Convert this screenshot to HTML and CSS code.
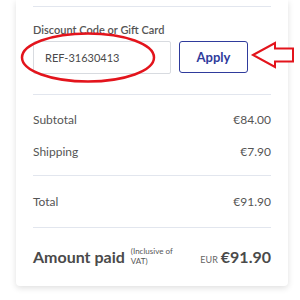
FILE: index.html
```html
<!DOCTYPE html>
<html>
<head>
<meta charset="utf-8">
<link rel="stylesheet" href="styles.css">
</head>
<body>
<div class="card">
  <hr class="divider first">
  <div class="discount">
    <div class="label">Discount Code or Gift Card</div>
    <div class="code-row">
      <div class="input">REF-31630413</div>
      <button class="apply">Apply</button>
    </div>
  </div>
  <hr class="divider">
  <div class="rows">
    <div class="row"><span>Subtotal</span><span>€84.00</span></div>
    <div class="row"><span>Shipping</span><span>€7.90</span></div>
  </div>
  <hr class="divider">
  <div class="row total"><span>Total</span><span>€91.90</span></div>
  <hr class="divider">
  <div class="paid">
    <div class="paid-left"><span class="paid-label">Amount paid</span><span class="vat">(Inclusive of<br>VAT)</span></div>
    <div class="paid-right"><span class="cur">EUR</span><span class="paid-amt">€91.90</span></div>
  </div>
</div>
<svg class="annot" width="300" height="300" viewBox="0 0 300 300">
  <ellipse cx="88" cy="57.5" rx="66" ry="24" fill="none" stroke="#e3141c" stroke-width="2.5"/>
  <path d="M253 55 L275 43 L275 48.5 L293 48.5 L293 61.5 L275 61.5 L275 67 Z" fill="#fff" stroke="#e3141c" stroke-width="2" stroke-linejoin="miter"/>
</svg>
</body>
</html>
```
FILE: styles.css
```css
html, body {
  margin: 0;
  padding: 0;
  background: #fff;
}
body {
  width: 300px;
  height: 300px;
  position: relative;
  overflow: hidden;
  font-family: Lato, "Noto Sans", sans-serif;
  color: #4a4a4a;
}
.card {
  margin-left: 16px;
  width: 272px;
  height: 286px;
  box-sizing: border-box;
  padding: 6px 17px 0;
  background: #fff;
  box-shadow: 0 2px 6px rgba(0,0,0,0.13);
  border-radius: 0 0 4px 4px;
}
.divider {
  border: 0;
  border-top: 1px solid #e2e6ee;
  margin: 0;
}
.discount {
  padding-top: 16px;
  padding-bottom: 20px;
}
.label {
  font-size: 11px;
  line-height: 14px;
  font-weight: 600;
  color: #555;
}
.code-row {
  display: flex;
  gap: 8px;
  margin-top: 4px;
}
.input {
  width: 138px;
  height: 33px;
  box-sizing: border-box;
  border: 1px solid #d8dbe0;
  border-radius: 2px;
  padding-left: 11px;
  font-size: 11px;
  line-height: 31px;
  color: #4a4a4a;
}
.apply {
  width: 69px;
  height: 32px;
  box-sizing: border-box;
  border: 1px solid #2f3b9c;
  border-radius: 3px;
  background: #fff;
  color: #2f3b9c;
  font-family: Lato, "Noto Sans", sans-serif;
  font-weight: 700;
  font-size: 13px;
  padding: 0;
}
.rows {
  padding: 17px 0 16px;
  display: flex;
  flex-direction: column;
  gap: 17px;
}
.row {
  display: flex;
  justify-content: space-between;
  font-size: 12px;
  line-height: 15px;
  color: #555;
}
.total {
  padding: 18px 0 18px;
}
.paid {
  display: flex;
  justify-content: space-between;
  align-items: center;
  padding-top: 18px;
}
.paid-left {
  display: flex;
  align-items: center;
  gap: 6px;
}
.paid-label {
  font-size: 16px;
  font-weight: 700;
  color: #4a4a4a;
}
.vat {
  font-size: 8px;
  line-height: 10px;
  color: #555;
}
.paid-right {
  display: flex;
  align-items: baseline;
  gap: 3px;
}
.cur {
  font-size: 9px;
  color: #666;
}
.paid-amt {
  font-size: 16px;
  font-weight: 700;
  color: #4a4a4a;
}
.annot {
  position: absolute;
  left: 0;
  top: 0;
  pointer-events: none;
}
```
